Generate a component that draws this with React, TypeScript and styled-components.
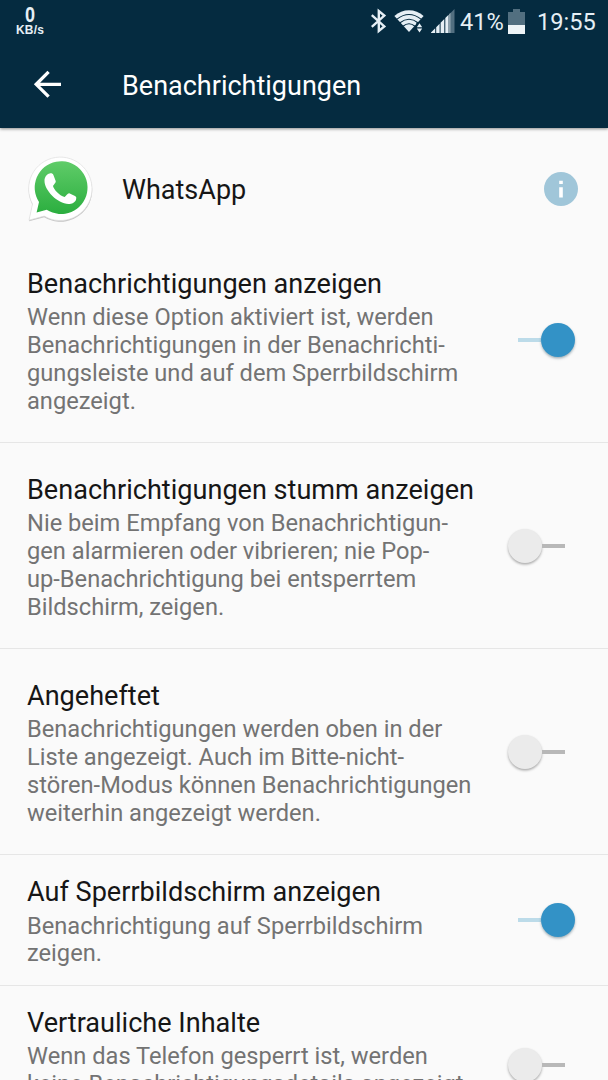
import React from "react";
import styled, { createGlobalStyle } from "styled-components";

const GlobalStyle = createGlobalStyle`
  * { box-sizing: border-box; }
  html, body { margin: 0; padding: 0; background: #fafafa; overflow: hidden; }
  body { font-family: Roboto, "Liberation Sans", sans-serif; }
`;

const Screen = styled.div`
  width: 608px;
  height: 1080px;
  overflow: hidden;
  background: #fafafa;
  display: flex;
  flex-direction: column;
`;

const Header = styled.header`
  flex: none;
  height: 128px;
  background: #052b40;
  color: #fff;
  box-shadow: 0 1px 3px rgba(0, 0, 0, 0.45);
`;

const StatusBar = styled.div`
  height: 42px;
  padding: 0 14px 0 15px;
  display: flex;
  justify-content: space-between;
  color: #e6eff5;
`;

const NetSpeed = styled.div`
  width: 30px;
  padding-top: 5px;
  display: flex;
  flex-direction: column;
  align-items: center;
  font-family: "Liberation Sans", sans-serif;
  font-weight: 700;
`;

const SpeedValue = styled.span`
  font-family: "Liberation Sans", sans-serif;
  font-size: 22px;
  line-height: 20px;
  transform: scaleX(0.82);
`;

const SpeedUnit = styled.span`
  font-size: 12px;
  line-height: 11px;
  letter-spacing: 0.2px;
`;

const StatusIcons = styled.div`
  display: flex;
  align-items: center;
  height: 42px;
`;

const StatusSvg = styled.svg<{ $gap?: number }>`
  display: block;
  flex: none;
  margin-right: ${(p) => p.$gap ?? 0}px;
`;

const StatusText = styled.span<{ $w: number }>`
  width: ${(p) => p.$w}px;
  font-size: 23.6px;
  line-height: 28px;
  margin-top: 1px;
  white-space: nowrap;
`;

const AppBar = styled.div`
  height: 86px;
  display: flex;
  align-items: center;
  padding-left: 27px;
`;

const BackButton = styled.button`
  width: 95px;
  height: 40px;
  padding: 0;
  border: 0;
  background: none;
  display: flex;
  align-items: center;
`;

const PageTitle = styled.h1`
  margin: 2px 0 0;
  font-size: 27px;
  line-height: 32px;
  font-weight: 400;
  white-space: nowrap;
`;

const AppRow = styled.section`
  flex: none;
  height: 109px;
  padding: 13px 30px 2px 26px;
  display: flex;
  align-items: center;
`;

const AppName = styled.h2`
  flex: 1;
  margin: 4px 0 0 29px;
  font-size: 27px;
  line-height: 32px;
  font-weight: 400;
  color: #161616;
`;

const InfoButton = styled.button`
  width: 34px;
  height: 34px;
  margin-top: 2px;
  padding: 0;
  border: 0;
  background: none;
`;

const SettingRow = styled.section<{ $h: number }>`
  flex: none;
  height: ${(p) => p.$h}px;
  padding: 0 33px 0 27px;
  border-bottom: 1px solid #e6e6e6;
  display: flex;
  align-items: center;
  justify-content: space-between;
`;

const SettingBody = styled.div`
  padding-top: 5.4px;
`;

const SettingTitle = styled.h3`
  margin: 0 0 4px;
  font-size: 27.08px;
  line-height: 31.6px;
  font-weight: 400;
  color: #161616;
  white-space: nowrap;
`;

const SettingText = styled.p`
  margin: 0;
  font-size: 23.66px;
  line-height: 27.9px;
  color: #737373;
  white-space: pre;
`;

const Toggle = styled.div<{ $on: boolean }>`
  flex: none;
  display: flex;
  align-items: center;
  flex-direction: ${(p) => (p.$on ? "row-reverse" : "row")};
  margin-right: ${(p) => (p.$on ? 0 : 10)}px;
`;

const Thumb = styled.span<{ $on: boolean }>`
  width: 34px;
  height: 34px;
  border-radius: 50%;
  background: ${(p) => (p.$on ? "#3392c6" : "#ebebeb")};
  box-shadow: 0 1.5px 2.5px ${(p) => (p.$on ? "rgba(20,60,80,.38)" : "rgba(0,0,0,.32)")};
`;

const Track = styled.span<{ $on: boolean }>`
  width: 23px;
  height: 4px;
  background: ${(p) => (p.$on ? "#bcdbe9" : "#b8b8b8")};
`;

const BluetoothIcon = () => (
  <StatusSvg $gap={7} width="17" height="26" viewBox="0 0 17 26" fill="none" stroke="#e6eff5" strokeWidth="2.4">
    <path d="M1.800 7.200 14.300 18.400 8.800 23V3L14.300 7.600 1.800 18.800" />
  </StatusSvg>
);

const WifiIcon = () => (
  <StatusSvg $gap={7} width="30" height="24" viewBox="0 0 30 24">
    <path d="M15 23 .4 7C8.500-.7 21.500-.7 29.600 7Z" fill="#e6eff5" />
    <g fill="none" stroke="#052b40" strokeWidth="1.1">
      <path d="M3 10.100Q15 .900 27 10.100" />
      <path d="M6 13.700Q15 6.700 24 13.700" />
      <path d="M9 17.200Q15 12.300 21 17.200" />
    </g>
    <path d="M22.300 13.500h7.700V24h-7.700z" fill="#052b40" />
    <path d="m25.500 14.200 2.700 4.100h-5.400zM25.500 23.500l2.700-4.100h-5.400z" fill="#e6eff5" />
  </StatusSvg>
);

const SignalIcon = () => (
  <StatusSvg $gap={5} width="24" height="24" viewBox="0 0 24 24">
    <path d="M0 24v-.6L4.200 19.200V24zM5.200 24v-5.800L8.600 14.800V24zM9.600 24V13.800l3.700-3.700V24zM14.300 24V9.100L17.600 5.800V24zM18.400 24V5l1.200-1.200V24z" fill="#e6eff5" />
    <path d="M19.600 24V3.900L23.500 0v24z" fill="#526f80" />
  </StatusSvg>
);

const BatteryIcon = () => (
  <StatusSvg $gap={12} width="17" height="25" viewBox="0 0 17 25">
    <path d="M5 0h7v3h5v13H0V3h5z" fill="#526f80" />
    <path d="M0 16h17v9H0z" fill="#eef4f7" />
  </StatusSvg>
);

const BackIcon = () => (
  <svg width="40" height="40" viewBox="0 0 40 40" fill="none" stroke="#fff" strokeWidth="3.300">
    <path d="M34 19.300H9.500M21.600 6.900 9.200 19.300l12.400 12.400" />
  </svg>
);

const WhatsAppIcon = () => (
  <svg width="67" height="67" viewBox="0 0 67 67">
    <defs>
      <linearGradient id="bubble" x1="0" y1="0" x2="0" y2="1">
        <stop offset="0" stopColor="#60cc69" />
        <stop offset="1" stopColor="#2bae3f" />
      </linearGradient>
    </defs>
    <path d="M3 65.700 6.500 49.300A31.700 31.700 0 1 1 18.200 61.600Z" fill="#b5b5b5" opacity=".8" transform="translate(0 .6)" />
    <path d="M3 65.200 6.500 49A31.700 31.700 0 1 1 18.200 61.100Z" fill="#fff" stroke="#dedede" strokeWidth=".7" />
    <path d="M10.600 57.500 13 47A26.400 26.400 0 1 1 20.700 54.700Z" fill="url(#bubble)" />
    <path d="M19.500 25.500C19.700 22.200 22 19 24.600 18.700C26.800 18.400 27.800 18.900 28.500 20.600L30.700 26.200C31.200 27.700 28.600 30 28 31.200C28.900 35 34.200 40.600 39.600 42.200C41 41.500 42.800 38.200 44.200 38.500L50 41.400C51.600 42.200 51.500 43.100 51 45C50.200 47.700 46.300 49.400 43.500 49.300C32.500 48.700 19.100 35.600 19.500 25.500Z" fill="#fff" transform="translate(-1 -.3)" />
  </svg>
);

const InfoIcon = () => (
  <svg width="34" height="34" viewBox="0 0 34 34">
    <circle cx="17" cy="17" r="17" fill="#a0c6d9" />
    <path d="M15.200 8.700h3.600v3.400h-3.600zM15.200 15.200h3.600v10.300h-3.600z" fill="#fff" />
  </svg>
);

const settings = [
  {
    title: "Benachrichtigungen anzeigen",
    text: "Wenn diese Option aktiviert ist, werden\nBenachrichtigungen in der Benachrichti-\ngungsleiste und auf dem Sperrbildschirm\nangezeigt.",
    on: true,
    height: 206,
  },
  {
    title: "Benachrichtigungen stumm anzeigen",
    text: "Nie beim Empfang von Benachrichtigun-\ngen alarmieren oder vibrieren; nie Pop-\nup-Benachrichtigung bei entsperrtem\nBildschirm, zeigen.",
    on: false,
    height: 206,
  },
  {
    title: "Angeheftet",
    text: "Benachrichtigungen werden oben in der\nListe angezeigt. Auch im Bitte-nicht-\nstören-Modus können Benachrichtigungen\nweiterhin angezeigt werden.",
    on: false,
    height: 206,
  },
  {
    title: "Auf Sperrbildschirm anzeigen",
    text: "Benachrichtigung auf Sperrbildschirm\nzeigen.",
    on: true,
    height: 131,
  },
  {
    title: "Vertrauliche Inhalte",
    text: "Wenn das Telefon gesperrt ist, werden\nkeine Benachrichtigungsdetails angezeigt.\n ",
    on: false,
    height: 158,
  },
];

export default function App() {
  return (
    <>
      <GlobalStyle />
      <Screen>
        <Header>
          <StatusBar>
            <NetSpeed>
              <SpeedValue>0</SpeedValue>
              <SpeedUnit>KB/s</SpeedUnit>
            </NetSpeed>
            <StatusIcons>
              <BluetoothIcon />
              <WifiIcon />
              <SignalIcon />
              <StatusText $w={48}>41%</StatusText>
              <BatteryIcon />
              <StatusText $w={57}>19:55</StatusText>
            </StatusIcons>
          </StatusBar>
          <AppBar>
            <BackButton aria-label="Zurück">
              <BackIcon />
            </BackButton>
            <PageTitle>Benachrichtigungen</PageTitle>
          </AppBar>
        </Header>
        <AppRow>
          <WhatsAppIcon />
          <AppName>WhatsApp</AppName>
          <InfoButton aria-label="Info">
            <InfoIcon />
          </InfoButton>
        </AppRow>
        {settings.map((s) => (
          <SettingRow key={s.title} $h={s.height}>
            <SettingBody>
              <SettingTitle>{s.title}</SettingTitle>
              <SettingText>{s.text}</SettingText>
            </SettingBody>
            <Toggle $on={s.on} role="switch" aria-checked={s.on}>
              <Thumb $on={s.on} />
              <Track $on={s.on} />
            </Toggle>
          </SettingRow>
        ))}
      </Screen>
    </>
  );
}
